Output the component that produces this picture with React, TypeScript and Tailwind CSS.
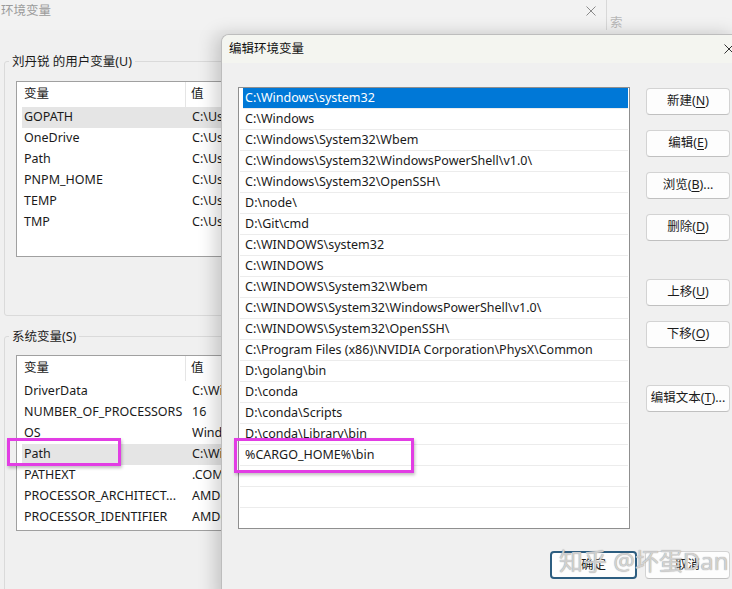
import React from 'react'

const userVars = [
  { name: 'GOPATH', value: 'C:\\Users\\刘丹锐\\go', active: true },
  { name: 'OneDrive', value: 'C:\\Users\\刘丹锐\\OneDrive' },
  { name: 'Path', value: 'C:\\Users\\刘丹锐\\AppData\\Local\\Microsoft\\WindowsApps' },
  { name: 'PNPM_HOME', value: 'C:\\Users\\刘丹锐\\AppData\\Local\\pnpm' },
  { name: 'TEMP', value: 'C:\\Users\\刘丹锐\\AppData\\Local\\Temp' },
  { name: 'TMP', value: 'C:\\Users\\刘丹锐\\AppData\\Local\\Temp' },
]

const systemVars = [
  { name: 'DriverData', value: 'C:\\Windows\\System32\\Drivers\\DriverData' },
  { name: 'NUMBER_OF_PROCESSORS', value: '16' },
  { name: 'OS', value: 'Windows_NT' },
  { name: 'Path', value: 'C:\\Windows\\system32;C:\\Windows', active: true },
  { name: 'PATHEXT', value: '.COM;.EXE;.BAT;.CMD;.VBS' },
  { name: 'PROCESSOR_ARCHITECT...', value: 'AMD64' },
  { name: 'PROCESSOR_IDENTIFIER', value: 'AMD64 Family 25 Model 80' },
]

const paths = [
  'C:\\Windows\\system32',
  'C:\\Windows',
  'C:\\Windows\\System32\\Wbem',
  'C:\\Windows\\System32\\WindowsPowerShell\\v1.0\\',
  'C:\\Windows\\System32\\OpenSSH\\',
  'D:\\node\\',
  'D:\\Git\\cmd',
  'C:\\WINDOWS\\system32',
  'C:\\WINDOWS',
  'C:\\WINDOWS\\System32\\Wbem',
  'C:\\WINDOWS\\System32\\WindowsPowerShell\\v1.0\\',
  'C:\\WINDOWS\\System32\\OpenSSH\\',
  'C:\\Program Files (x86)\\NVIDIA Corporation\\PhysX\\Common',
  'D:\\golang\\bin',
  'D:\\conda',
  'D:\\conda\\Scripts',
  'D:\\conda\\Library\\bin',
  '%CARGO_HOME%\\bin',
  '',
  '',
  '',
]

function CloseIcon({ color }: { color: string }) {
  return (
    <svg width="10" height="10" viewBox="0 0 10 10" fill="none">
      <path d="M0.5 0.5L9.5 9.5M9.5 0.5L0.5 9.5" stroke={color} strokeWidth="1" />
    </svg>
  )
}

function VarList({ rows }: { rows: { name: string; value: string; active?: boolean }[] }) {
  return (
    <div className="ml-[11px] w-[570px] h-[176px] bg-white border border-[#a0a0a0] overflow-hidden">
      <div className="flex h-[25px] items-center">
        <div className="w-[169px] h-full flex items-center pl-[7px] border-r border-[#e5e5e5]">变量</div>
        <div className="pl-[5px]">值</div>
      </div>
      {rows.map((r) => (
        <div
          key={r.name}
          className={`ml-[5px] flex h-[21px] items-center ${r.active ? 'bg-[#e5e5e5]' : ''}`}
        >
          <div className="w-[164px] pl-[2px] whitespace-nowrap overflow-hidden">{r.name}</div>
          <div className="pl-[6px] whitespace-nowrap">{r.value}</div>
        </div>
      ))}
    </div>
  )
}

function SideButton({ label, mn, tail }: { label: string; mn: string; tail?: string }) {
  return (
    <button className="w-[84px] h-[27px] rounded-[4px] bg-[#fdfdfd] border border-[#d3d3d3] border-b-[#c0c0c0] text-[#1b1b1b] flex items-center justify-center">
      {label}(<span className="underline underline-offset-2">{mn}</span>){tail}
    </button>
  )
}

export default function App() {
  return (
    <div className="relative w-[732px] h-[589px] overflow-hidden bg-[#f0f0f0] text-[12.5px] leading-none text-[#1a1a1a] font-['Noto_Sans','Noto_Sans_CJK_SC',sans-serif]">
      {/* background window: 环境变量 */}
      <div className="flex flex-col h-full">
        <div className="flex h-[34px] bg-[#f2f2f2]">
          <div className="w-[607px] flex items-start border-r border-[#d8d8d8]">
            <span className="pt-[5px] pl-[1px] text-[#9b9b9b]">环境变量</span>
            <span className="ml-auto mr-[10px] mt-[6px]">
              <CloseIcon color="#8a8a8a" />
            </span>
          </div>
          <div className="pl-[3px] pt-[17px] text-[#b8b8b8]">索</div>
        </div>

        <div className="pl-[4px] flex flex-col">
          <fieldset className="mt-[24px] w-[592px] border border-[#dadada] rounded-[3px] pt-[11px] pb-[58px]">
            <legend className="ml-[4px] px-[3px] leading-[16px]">刘丹锐 的用户变量(U)</legend>
            <VarList rows={userVars} />
          </fieldset>

          <fieldset className="mt-[13px] w-[592px] h-[300px] border border-[#dadada] rounded-[3px] pt-[10px]">
            <legend className="ml-[4px] px-[3px] leading-[16px]">系统变量(S)</legend>
            <VarList rows={systemVars} />
          </fieldset>
        </div>
      </div>

      {/* foreground dialog: 编辑环境变量 */}
      <div className="absolute left-[221px] top-[34px] w-[516px] h-[570px] bg-[#f0f0f0] border-l border-t border-[#bdbdbd] rounded-tl-[8px] shadow-[-6px_0_18px_rgba(0,0,0,0.18)] flex flex-col overflow-hidden">
        <div className="h-[28px] shrink-0 flex items-center bg-[#f4f5f0] pl-[7px]">
          <span className="text-[#111]">编辑环境变量</span>
          <span className="ml-auto mr-[3px]">
            <CloseIcon color="#333" />
          </span>
        </div>

        <div className="flex pl-[16px]">
          <div className="mt-[24px] w-[392px] h-[442px] bg-white border border-[#8f8f8f] px-[1px] overflow-hidden">
            {paths.map((p, i) => (
              <div
                key={i}
                className={`h-[21px] flex items-center border-b border-[#ececec] ${
                  i === 0 ? 'bg-[#0078d7] text-white ml-[3px] pl-[2px]' : 'pl-[5px]'
                }`}
              >
                {p}
              </div>
            ))}
          </div>

          <div className="ml-[16px] mt-[25px] flex flex-col gap-[15px]">
            <SideButton label="新建" mn="N" />
            <SideButton label="编辑" mn="E" />
            <SideButton label="浏览" mn="B" tail="..." />
            <SideButton label="删除" mn="D" />
            <div className="mt-[23px] flex flex-col gap-[15px]">
              <SideButton label="上移" mn="U" />
              <SideButton label="下移" mn="O" />
            </div>
            <div className="mt-[22px]">
              <SideButton label="编辑文本" mn="T" tail="..." />
            </div>
          </div>
        </div>

        <div className="flex gap-[8px] pl-[328px] mt-[22px]">
          <button className="w-[87px] h-[28px] rounded-[4px] bg-[#fdfdfd] border-2 border-[#2c5d80] text-[#1b1b1b] flex items-center justify-center">
            确定
          </button>
          <button className="w-[85px] h-[28px] rounded-[4px] bg-[#fdfdfd] border border-[#d3d3d3] border-b-[#c0c0c0] text-[#1b1b1b] flex items-center justify-center">
            取消
          </button>
        </div>
      </div>

      {/* highlight boxes */}
      <div className="absolute left-[7px] top-[438px] w-[114px] h-[28px] border-[3px] border-[#e23de4] shadow-[1px_2px_3px_rgba(0,0,0,0.25)]" />
      <div className="absolute left-[234px] top-[438px] w-[180px] h-[35px] border-[3px] border-[#e23de4] shadow-[1px_2px_3px_rgba(0,0,0,0.25)]" />

      {/* watermark */}
      <div className="absolute left-[559px] top-[549px] text-[24px] leading-none text-[#e6e6e6]/80 [text-shadow:0_0_1px_#7a7a7a] whitespace-nowrap">
        知乎 @坏蛋Dan
      </div>
    </div>
  )
}
